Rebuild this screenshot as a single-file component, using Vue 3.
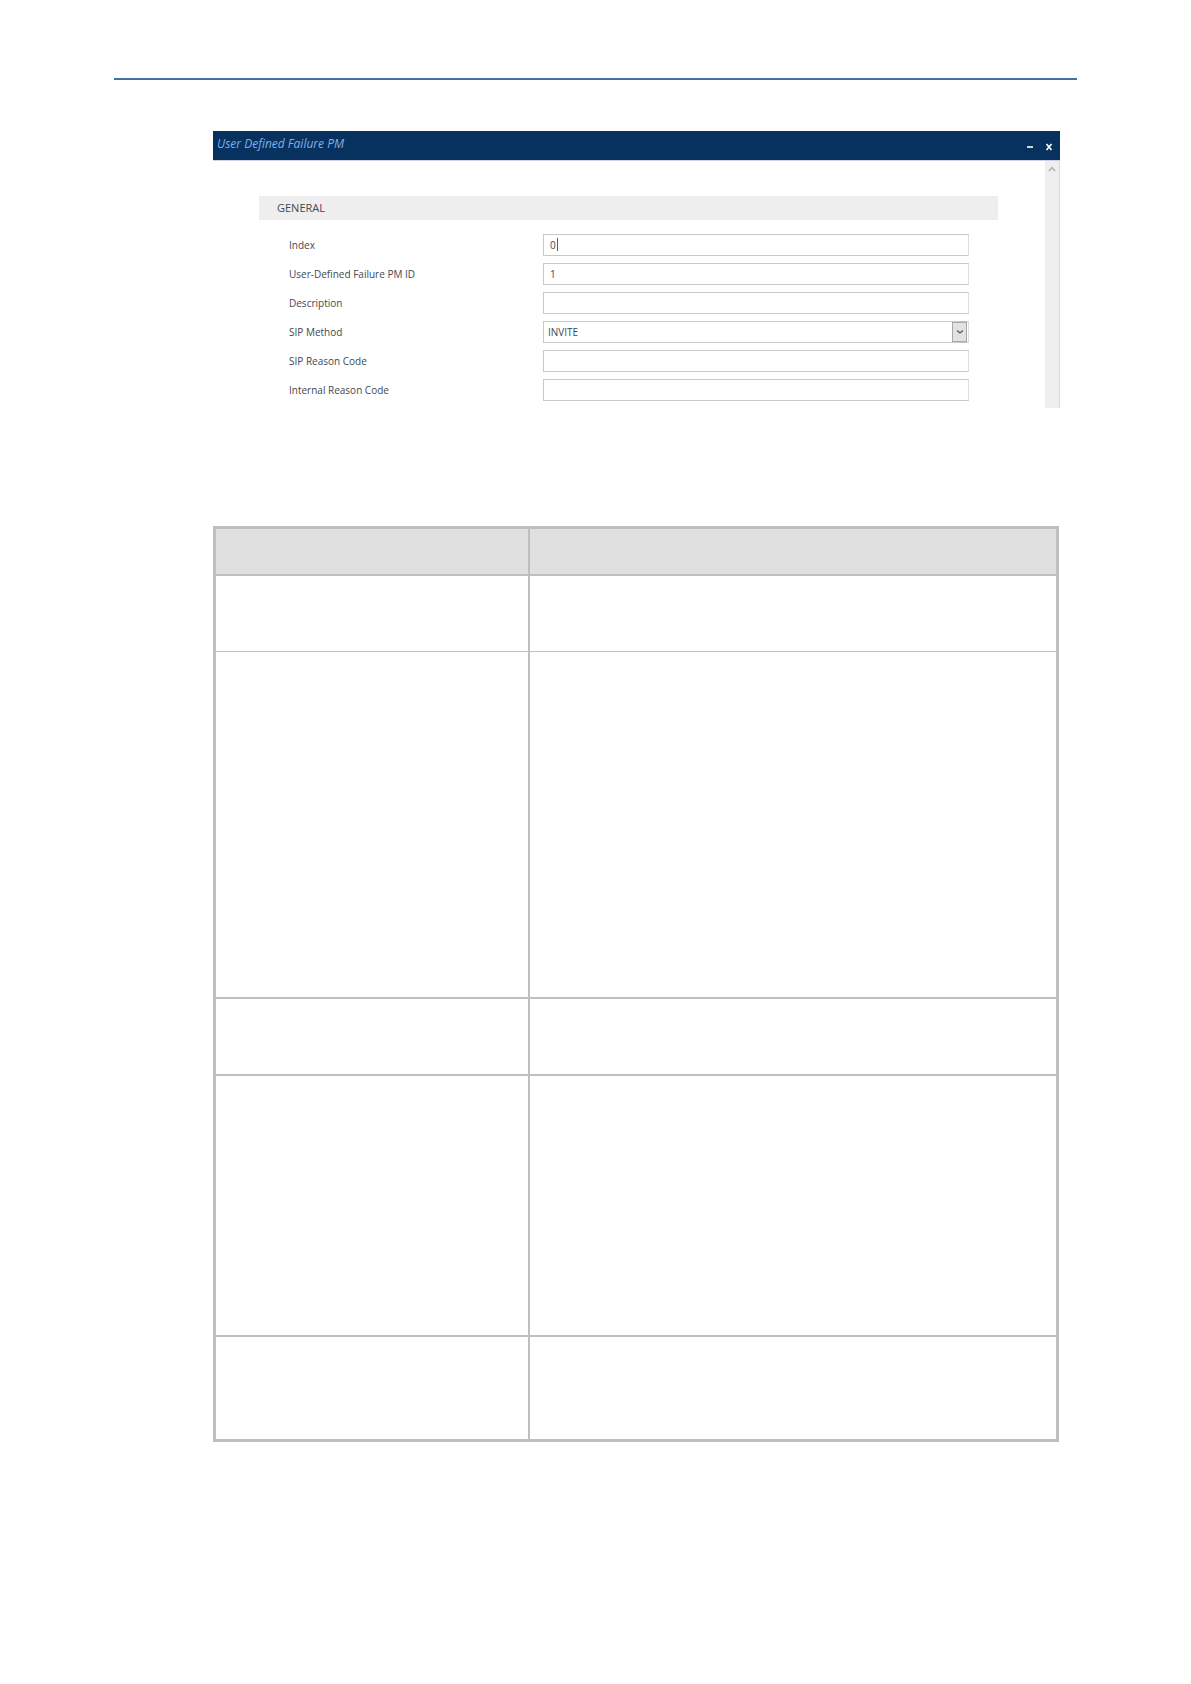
<template>
    <main class="page">
        <hr class="page-rule">
        <div class="content">
            <section class="dialog" aria-labelledby="dialog-title">
                <header class="titlebar">
                    <h1 id="dialog-title" class="title">User Defined Failure PM</h1>
                    <div class="window-buttons">
                        <button type="button" aria-label="Minimize">
                            <svg width="8" height="8" viewBox="0 0 8 8"><path d="M1 4h6" /></svg>
                        </button>
                        <button type="button" aria-label="Close">
                            <svg width="8" height="8" viewBox="0 0 8 8"><path d="M1.5 1l5 6M6.5 1l-5 6" /></svg>
                        </button>
                    </div>
                </header>
                <div class="dialog-main">
                    <form class="form" @submit.prevent>
                        <h2 class="section-title">GENERAL</h2>
                        <div class="fields">
                            <div v-for="field in fields" :key="field.id" class="field">
                                <label :for="field.id">{{ field.label }}</label>
                                <div class="control">
                                    <template v-if="field.options">
                                        <select :id="field.id" v-model="field.value">
                                            <option v-for="option in field.options" :key="option">{{ option }}</option>
                                        </select>
                                        <span class="select-arrow">
                                            <svg width="8" height="6" viewBox="0 0 8 6"><path d="M1 1.5l3 2.5 3-2.5" /></svg>
                                        </span>
                                    </template>
                                    <input v-else :id="field.id" v-model="field.value" type="text">
                                    <span v-if="field.id === 'index'" class="caret"></span>
                                </div>
                            </div>
                        </div>
                    </form>
                    <div class="scrollbar">
                        <svg width="8" height="6" viewBox="0 0 8 6"><path d="M1 5l3-3.5L7 5" /></svg>
                    </div>
                </div>
            </section>

            <table class="parameters">
                <colgroup>
                    <col class="col-parameter">
                    <col>
                </colgroup>
                <thead>
                    <tr>
                        <th></th>
                        <th></th>
                    </tr>
                </thead>
                <tbody>
                    <tr v-for="(row, i) in rows" :key="i" :class="{ thin: row.thin }" :style="{ height: row.height + 'px' }">
                        <td></td>
                        <td></td>
                    </tr>
                </tbody>
            </table>
        </div>
    </main>
</template>

<script setup>
import { ref } from 'vue'

const fields = ref([
    { id: 'index', label: 'Index', value: '0' },
    { id: 'pm-id', label: 'User-Defined Failure PM ID', value: '1' },
    { id: 'description', label: 'Description', value: '' },
    { id: 'sip-method', label: 'SIP Method', value: 'INVITE', options: ['INVITE'] },
    { id: 'sip-reason', label: 'SIP Reason Code', value: '' },
    { id: 'internal-reason', label: 'Internal Reason Code', value: '' }
])

// Row heights include the bottom border
const rows = [
    { height: 76, thin: true },
    { height: 347 },
    { height: 77 },
    { height: 261 },
    { height: 102 }
]
</script>

<style>
body {
    margin: 0;
    background-color: #fff;
}
</style>

<style scoped>
.page {
    padding: 78px 114px;
    font-family: "Open Sans", Arial, sans-serif;
    color: #424850;
}

.page-rule {
    height: 2px;
    margin: 0;
    border: 0;
    background-color: #4470a8;
}

.content {
    padding: 51px 17px 0 99px;
}

.titlebar {
    display: flex;
    justify-content: space-between;
    height: 29px;
    padding: 0 6px 0 4px;
    background-color: #07325f;
    border-bottom: 1px solid #ccd3de;
}

.title {
    margin: 0;
    font-size: 12px;
    line-height: 26px;
    font-weight: 400;
    font-style: italic;
    color: #7fb0ea;
}

.window-buttons {
    display: flex;
    align-items: center;
    gap: 9px;
    padding-top: 3px;
}

.window-buttons button {
    display: flex;
    padding: 1px;
    border: 0;
    background: none;
}

svg {
    display: block;
    fill: none;
}

.window-buttons svg {
    stroke: #fff;
    stroke-width: 1.6;
}

.dialog-main {
    display: flex;
}

.form {
    flex: 1;
    padding: 35px 47px 7px 46px;
}

.section-title {
    margin: 0;
    padding-left: 18px;
    font-size: 11px;
    line-height: 24px;
    font-weight: 400;
    background-color: #eee;
}

.fields {
    display: grid;
    gap: 7px;
    padding: 14px 29px 0 30px;
}

.field {
    display: flex;
    align-items: center;
    font-size: 10px;
}

.field label {
    width: 254px;
}

.control {
    position: relative;
    flex: 1;
}

.control input,
.control select {
    display: block;
    box-sizing: border-box;
    width: 100%;
    height: 22px;
    margin: 0;
    padding: 0 6px;
    font: inherit;
    color: inherit;
    background-color: #fff;
    border: 1px solid #c8c8cc;
    border-right-color: #dedede;
    border-radius: 0;
    outline: 0;
}

.control select {
    padding: 0 4px;
    appearance: none;
}

.select-arrow {
    position: absolute;
    top: 1px;
    right: 2px;
    display: flex;
    align-items: center;
    justify-content: center;
    box-sizing: border-box;
    width: 15px;
    height: 20px;
    background-color: #e2e2e2;
    border: 1px solid #a8a8a8;
    pointer-events: none;
}

.select-arrow svg {
    stroke: #555;
    stroke-width: 1.2;
}

/* Text cursor of the focused field */
.caret {
    position: absolute;
    top: 4px;
    left: 14px;
    width: 1px;
    height: 13px;
    background-color: #555a80;
}

.scrollbar {
    display: flex;
    justify-content: center;
    box-sizing: border-box;
    width: 15px;
    padding-top: 5px;
    background-color: #efefef;
    border-right: 1px solid #d8d8d8;
}

.scrollbar svg {
    stroke: #b4b4b4;
    stroke-width: 1.6;
}

.parameters {
    width: calc(100% - 1px);
    margin-top: 118px;
    table-layout: fixed;
    border: 3px solid #bfbfbf;
    border-collapse: separate;
    border-spacing: 0;
}

.col-parameter {
    width: 314px;
}

.parameters thead tr {
    height: 47px;
}

.parameters th,
.parameters td {
    padding: 0;
    border-bottom: 2px solid #bfbfbf;
}

.parameters th {
    background-color: #e0e0e0;
}

.parameters th:first-child,
.parameters td:first-child {
    border-right: 2px solid #bfbfbf;
}

.parameters .thin td {
    border-bottom-width: 1px;
}

.parameters tbody tr:last-child td {
    border-bottom: 0;
}
</style>
